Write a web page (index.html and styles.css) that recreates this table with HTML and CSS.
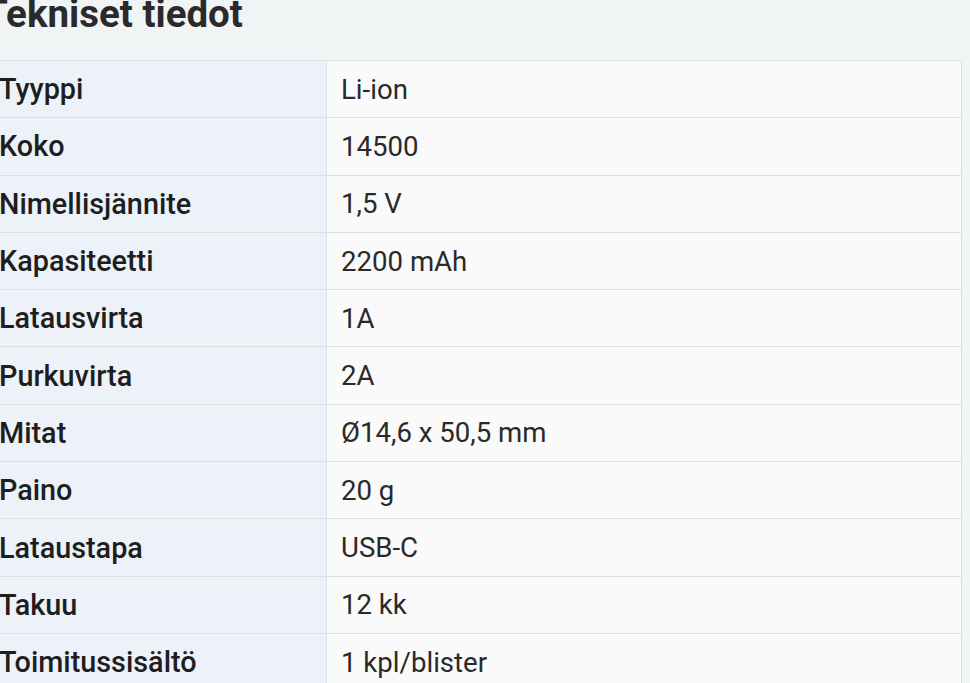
FILE: index.html
```html
<!DOCTYPE html>
<html lang="fi">
<head>
<meta charset="utf-8">
<title>Tekniset tiedot</title>
<link rel="stylesheet" href="styles.css">
</head>
<body>
<section class="specs">
  <h2 class="specs-title">Tekniset tiedot</h2>
  <table class="specs-table">
    <tbody>
      <tr><th>Tyyppi</th><td>Li-ion</td></tr>
      <tr><th>Koko</th><td>14500</td></tr>
      <tr><th>Nimellisjännite</th><td>1,5 V</td></tr>
      <tr><th>Kapasiteetti</th><td>2200 mAh</td></tr>
      <tr><th>Latausvirta</th><td>1A</td></tr>
      <tr><th>Purkuvirta</th><td>2A</td></tr>
      <tr><th>Mitat</th><td>Ø14,6 x 50,5 mm</td></tr>
      <tr><th>Paino</th><td>20 g</td></tr>
      <tr><th>Lataustapa</th><td>USB-C</td></tr>
      <tr><th>Takuu</th><td>12 kk</td></tr>
      <tr><th>Toimitussisältö</th><td>1 kpl/blister</td></tr>
    </tbody>
  </table>
</section>
</body>
</html>
```

FILE: styles.css
```css
html, body {
  margin: 0;
  padding: 0;
  background: #f0f4f5;
  overflow: hidden;
}

body {
  font-family: Roboto, "Liberation Sans", Arial, sans-serif;
  color: #222222;
}

.specs {
  margin-left: -16px;
  width: 978px;
  margin-top: -6px;
}

.specs-title {
  margin: 0;
  font-size: 38.5px;
  font-weight: 700;
  line-height: 40px;
  color: #2a2a2a;
  height: 66px;
}

.specs-table {
  width: 100%;
  border-collapse: collapse;
  border: 1px solid #dcdedf;
}

.specs-table th,
.specs-table td {
  height: 57.3px;
  padding: 0 14px;
  border-bottom: 1px solid #dcdedf;
  font-size: 27.6px;
  text-align: left;
  vertical-align: middle;
  box-sizing: border-box;
}

.specs-table th {
  width: 342px;
  font-size: 28.8px;
  font-weight: 500;
  background: #edf1f8;
  border-right: 1px solid #dfe2e5;
  color: #1e1e1e;
}

.specs-table td {
  font-weight: 400;
  background: #fafafa;
  color: #2a2a2a;
}
```
